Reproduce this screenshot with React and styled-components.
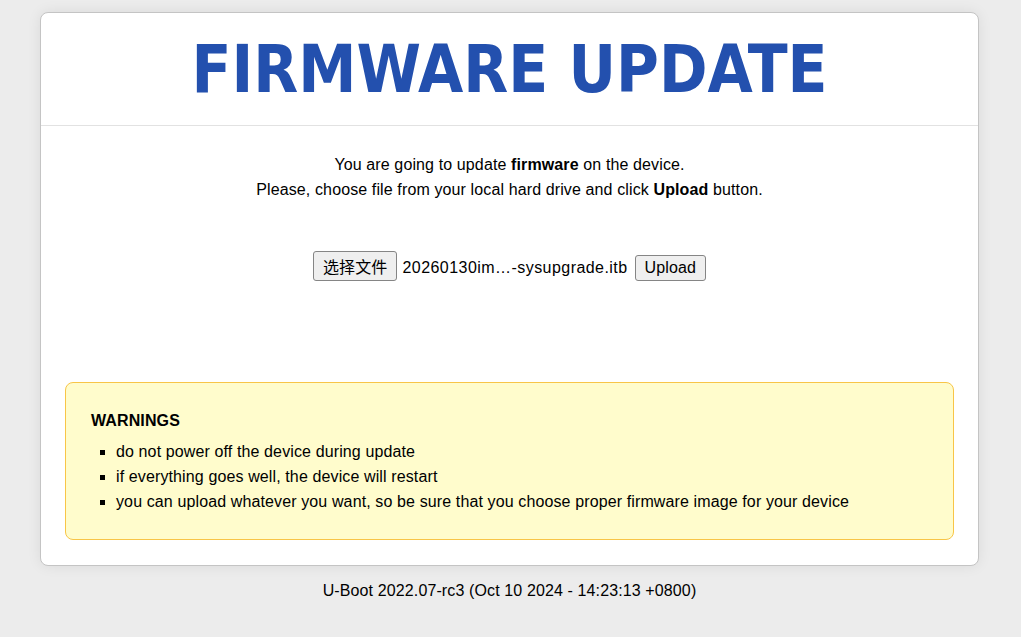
import React from "react";
import styled, { createGlobalStyle } from "styled-components";

const GlobalStyle = createGlobalStyle`
  html, body {
    margin: 0;
    padding: 0;
    background: #ececec;
    font-family: "Liberation Sans", Arial, sans-serif;
    font-size: 16px;
    letter-spacing: 0.12px;
    color: #000;
  }
`;

const Page = styled.div`
  width: 939px;
  margin: 0 0 0 40px;
  padding-top: 12px;
  display: flex;
  flex-direction: column;
  align-items: center;
`;

const Card = styled.div`
  box-sizing: border-box;
  width: 939px;
  background: #fff;
  border: 1px solid #c4c4c4;
  border-radius: 8px;
  box-shadow: 0 0 14px rgba(0, 0, 0, 0.08);
`;

const Header = styled.div`
  border-bottom: 1px solid #e2e2e2;
  height: 112px;
  display: flex;
  align-items: center;
  justify-content: center;
`;

const Title = styled.h1`
  margin: 0;
  font-family: "DejaVu Sans Condensed", "DejaVu Sans", Verdana, sans-serif;
  font-stretch: condensed;
  font-weight: bold;
  font-size: 65px;
  color: #2350ae;
  letter-spacing: 0;
`;

const Body = styled.div`
  padding: 26px 24px 25px;
  text-align: center;
`;

const Intro = styled.p`
  margin: 0;
  line-height: 25px;
`;

const UploadForm = styled.form`
  margin: 49px 0 101px;
  display: flex;
  align-items: baseline;
  justify-content: center;
  height: 30px;
`;

const NativeButton = styled.button`
  font-family: "Liberation Sans", Arial, "Noto Sans CJK SC", sans-serif;
  font-size: 16px;
  letter-spacing: 0.12px;
  color: #000;
  background: #efefef;
  border: 1px solid #858585;
  border-radius: 3px;
  padding: 0 9px;
  height: ${({ $tall }) => ($tall ? "30px" : "26px")};
`;

const FileName = styled.span`
  margin: 0 7px 0 5px;
  letter-spacing: 0.45px;
`;

const Warning = styled.div`
  text-align: left;
  background: #fffccc;
  border: 1px solid #f8c547;
  border-radius: 8px;
  padding: 29px 25px 25px;
`;

const WarnTitle = styled.div`
  font-weight: bold;
  margin-bottom: 9px;
`;

const List = styled.ul`
  margin: 0;
  padding-left: 25px;
  list-style: square;
  li {
    line-height: 25px;
  }
`;

const Footer = styled.div`
  margin-top: 15px;
  line-height: 20px;
`;

export default function App() {
  return (
    <>
      <GlobalStyle />
      <Page>
        <Card>
          <Header>
            <Title>FIRMWARE UPDATE</Title>
          </Header>
          <Body>
            <Intro>
              You are going to update <b>firmware</b> on the device.
            </Intro>
            <Intro>
              Please, choose file from your local hard drive and click{" "}
              <b>Upload</b> button.
            </Intro>
            <UploadForm onSubmit={(e) => e.preventDefault()}>
              <NativeButton type="button" $tall>
                选择文件
              </NativeButton>
              <FileName>20260130im…-sysupgrade.itb</FileName>
              <NativeButton type="submit">Upload</NativeButton>
            </UploadForm>
            <Warning>
              <WarnTitle>WARNINGS</WarnTitle>
              <List>
                <li>do not power off the device during update</li>
                <li>if everything goes well, the device will restart</li>
                <li>
                  you can upload whatever you want, so be sure that you choose
                  proper firmware image for your device
                </li>
              </List>
            </Warning>
          </Body>
        </Card>
        <Footer>U-Boot 2022.07-rc3 (Oct 10 2024 - 14:23:13 +0800)</Footer>
      </Page>
    </>
  );
}
